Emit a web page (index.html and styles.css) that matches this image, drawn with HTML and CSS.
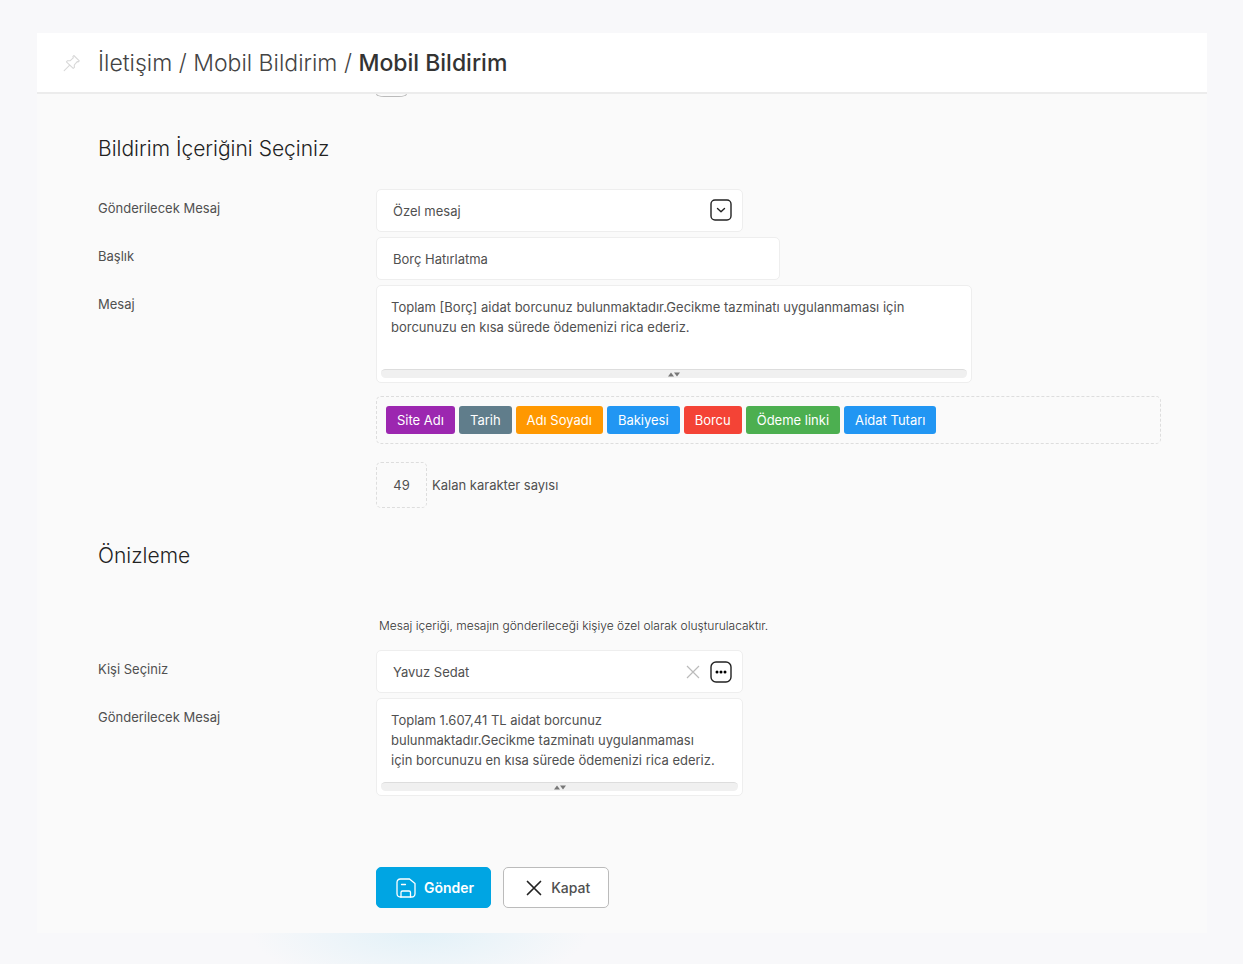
FILE: index.html
```html
<!DOCTYPE html>
<html lang="tr">
<head>
    <meta charset="UTF-8">
    <meta name="viewport" content="width=device-width, initial-scale=1.0">
    <title>Mobil Bildirim</title>
    <link rel="stylesheet" href="styles.css">
</head>
<body>
    <div class="panel">
        <header class="panel-header">
            <button type="button" class="icon-btn pin" aria-label="Sabitle">
                <svg width="18" height="18" viewBox="0 0 18 18" fill="none" stroke="#d8d8d8" stroke-width="1.1" stroke-linejoin="round" stroke-linecap="round">
                    <path d="M10.8 1.5 16.3 6.8 15 8 14.2 7.6 11.3 11 11.4 13.4 10.2 14.4 3.4 7.8 4.6 6.7 7 6.8 10.3 3.8 9.9 2.6Z"/>
                    <path d="M6.7 11.2 1.2 16.6"/>
                </svg>
            </button>
            <h1>İletişim / Mobil Bildirim / <strong>Mobil Bildirim</strong></h1>
        </header>

        <form class="content" onsubmit="return false">
            <div class="row">
                <span></span>
                <div class="scrolled-box"></div>
            </div>

            <h2>Bildirim İçeriğini Seçiniz</h2>

            <div class="row">
                <label for="mesajTipi">Gönderilecek Mesaj</label>
                <div class="field w-small">
                    <select id="mesajTipi">
                        <option>Özel mesaj</option>
                    </select>
                    <svg class="select-icon" width="22" height="22" viewBox="0 0 22 22" fill="none" stroke="#222" stroke-width="1.4" stroke-linecap="round" stroke-linejoin="round">
                        <rect x="1" y="1" width="20" height="20" rx="4"/>
                        <path d="M7.5 9.5 11 12.8 14.5 9.5"/>
                    </svg>
                </div>
            </div>

            <div class="row">
                <label for="baslik">Başlık</label>
                <div class="field w-medium">
                    <input type="text" id="baslik" value="Borç Hatırlatma">
                </div>
            </div>

            <div class="row">
                <label for="mesaj">Mesaj</label>
                <div>
                    <div class="area w-large">
                        <textarea id="mesaj">Toplam [Borç] aidat borcunuz bulunmaktadır.Gecikme tazminatı uygulanmaması için borcunuzu en kısa sürede ödemenizi rica ederiz.</textarea>
                        <div class="grip">
                            <svg width="12" height="5" viewBox="0 0 12 5" fill="#777"><path d="M0 4.5 3 .5 6 4.5ZM6 .5H12L9 4.5Z"/></svg>
                        </div>
                    </div>

                    <div class="tags">
                        <button type="button" class="tag purple">Site Adı</button>
                        <button type="button" class="tag grey">Tarih</button>
                        <button type="button" class="tag orange">Adı Soyadı</button>
                        <button type="button" class="tag blue">Bakiyesi</button>
                        <button type="button" class="tag red">Borcu</button>
                        <button type="button" class="tag green">Ödeme linki</button>
                        <button type="button" class="tag blue">Aidat Tutarı</button>
                    </div>

                    <div class="counter">
                        <span class="count">49</span>
                        <span>Kalan karakter sayısı</span>
                    </div>
                </div>
            </div>

            <h2>Önizleme</h2>

            <div class="row">
                <span></span>
                <p class="note">Mesaj içeriği, mesajın gönderileceği kişiye özel olarak oluşturulacaktır.</p>
            </div>

            <div class="row">
                <label for="kisi">Kişi Seçiniz</label>
                <div class="field w-small">
                    <input type="text" id="kisi" value="Yavuz Sedat">
                    <button type="button" class="icon-btn" aria-label="Temizle">
                        <svg width="14" height="14" viewBox="0 0 14 14" stroke="#bbb" stroke-width="1.2"><path d="M1 1 13 13M13 1 1 13"/></svg>
                    </button>
                    <button type="button" class="icon-btn more" aria-label="Kişi ara">
                        <svg width="22" height="22" viewBox="0 0 22 22">
                            <rect x="1" y="1" width="20" height="20" rx="5" fill="none" stroke="#222" stroke-width="1.4"/>
                            <circle cx="7" cy="11" r="1.5"/><circle cx="11" cy="11" r="1.5"/><circle cx="15" cy="11" r="1.5"/>
                        </svg>
                    </button>
                </div>
            </div>

            <div class="row">
                <label for="onizleme">Gönderilecek Mesaj</label>
                <div class="area w-small">
                    <textarea id="onizleme">Toplam 1.607,41 TL aidat borcunuz bulunmaktadır.Gecikme tazminatı uygulanmaması için borcunuzu en kısa sürede ödemenizi rica ederiz.</textarea>
                    <div class="grip">
                        <svg width="12" height="5" viewBox="0 0 12 5" fill="#777"><path d="M0 4.5 3 .5 6 4.5ZM6 .5H12L9 4.5Z"/></svg>
                    </div>
                </div>
            </div>

            <div class="row actions-row">
                <span></span>
                <div class="actions">
                    <button type="submit" class="btn primary">
                        <svg width="20" height="20" viewBox="0 0 20 20" fill="none" stroke="#fff" stroke-width="1.3" stroke-linejoin="round" stroke-linecap="round">
                            <path d="M4.500 1H13.5L19 5.500V15.5Q19 19 15.5 19H4.5Q1 19 1 15.5V4.5Q1 1 4.5 1Z"/>
                            <path d="M5.5 6.5H9.5M5 19V14.5Q5 13 6.5 13H13Q14.5 13 14.5 14.5V19"/>
                        </svg>
                        Gönder
                    </button>
                    <button type="button" class="btn">
                        <svg width="16" height="16" viewBox="0 0 16 16" stroke="#222" stroke-width="1.7" stroke-linecap="round"><path d="M1.5 1.5 14.5 14.5M14.5 1.5 1.5 14.5"/></svg>
                        Kapat
                    </button>
                </div>
            </div>
        </form>
    </div>
</body>
</html>
```

FILE: styles.css
```css
* {
    box-sizing: border-box;
}

body {
    margin: 0;
    padding: 33px 36px 31px 37px;
    min-height: 100vh;
    font-family: Inter, "Open Sans", sans-serif;
    font-size: 13px;
    line-height: 20px;
    color: #505050;
    background: radial-gradient(ellipse 170px 60px at 420px 930px, #e2f1f8, rgba(226, 241, 248, 0)) #f8f8fa;
}

h1, h2, p {
    margin: 0;
}

button, input, select, textarea {
    font: inherit;
    color: inherit;
}

button {
    cursor: pointer;
}

.panel {
    background: #fafafa;
}

.panel-header {
    display: flex;
    align-items: center;
    gap: 17px;
    height: 61px;
    padding: 0 26px;
    background: #fff;
    border-bottom: 2px solid #ececec;
}

.panel-header h1 {
    font-size: 23px;
    line-height: 30px;
    font-weight: 300;
    color: #444;
}

.panel-header strong {
    font-weight: 500;
    color: #333;
}

.icon-btn {
    display: flex;
    padding: 0;
    border: 0;
    background: none;
}

.content {
    padding: 0 46px 25px 61px;
}

.content h2 {
    margin: 33px 0 25px;
    font-size: 21px;
    line-height: 30px;
    font-weight: 300;
    color: #222;
}

.row {
    display: grid;
    grid-template-columns: 278px 1fr;
    margin-bottom: 5px;
}

.row > label {
    padding-top: 9px;
}

/* bottom edge of the control scrolled under the header */
.scrolled-box {
    width: 31px;
    height: 3px;
    margin-bottom: 4px;
    border: 1px solid #bbb;
    border-top: 0;
    border-radius: 0 0 8px 8px / 0 0 3px 3px;
}

/* fields */
.field, .area {
    position: relative;
    border: 1px solid #eee;
    border-radius: 5px;
    background: #fff;
}

.field {
    display: flex;
    align-items: center;
    height: 43px;
    padding-right: 10px;
}

.field input, .field select {
    flex: 1;
    min-width: 0;
    height: 100%;
    padding: 0 16px;
    border: 0;
    outline: 0;
    background: none;
    appearance: none;
}

.select-icon {
    position: absolute;
    right: 10px;
    top: 9px;
    pointer-events: none;
}

.more {
    margin-left: 10px;
}

.w-small { max-width: 367px; }
.w-medium { max-width: 404px; }
.w-large { max-width: 596px; }

.area {
    padding: 0 4px 4px;
}

.area textarea {
    display: block;
    width: 100%;
    height: 83px;
    padding: 11px 20px 11px 10px;
    border: 0;
    outline: 0;
    resize: none;
    overflow: hidden;
    background: none;
}

.grip {
    display: flex;
    align-items: center;
    justify-content: center;
    height: 9px;
    border-top: 1px solid #ddd;
    border-radius: 5px;
    background: #f0f0f0;
    cursor: s-resize;
}

/* message variables */
.tags {
    display: flex;
    flex-wrap: wrap;
    gap: 4px;
    margin-top: 13px;
    padding: 9px;
    border: 1px dashed #ddd;
    border-radius: 5px;
}

.tag {
    height: 28px;
    padding: 0 11px;
    border: 0;
    border-radius: 3px;
    color: #fff;
}

.purple { background: #9c27b0; }
.grey { background: #607d8b; }
.orange { background: #ff9800; }
.blue { background: #2196f3; }
.red { background: #f44336; }
.green { background: #4caf50; }

.counter {
    display: flex;
    align-items: center;
    gap: 5px;
    margin-top: 18px;
}

.count {
    width: 51px;
    padding: 12px 0;
    border: 1px dashed #ddd;
    border-radius: 5px;
    text-align: center;
}

.note {
    margin: 20px 0 9px 3px;
    font-size: 12px;
    font-weight: 300;
    color: #333;
}

/* buttons */
.actions-row {
    margin-top: 71px;
    margin-bottom: 0;
}

.actions {
    display: flex;
    gap: 12px;
}

.btn {
    display: flex;
    align-items: center;
    gap: 9px;
    height: 41px;
    padding: 0 18px 0 22px;
    border: 1px solid #bbb;
    border-radius: 5px;
    background: #fff;
    font-size: 14px;
    font-weight: 500;
}

.btn.primary {
    gap: 8px;
    padding: 0 16px 0 19px;
    border-color: #00a5e3;
    background: #00a5e3;
    color: #fff;
    font-weight: 600;
}
```
